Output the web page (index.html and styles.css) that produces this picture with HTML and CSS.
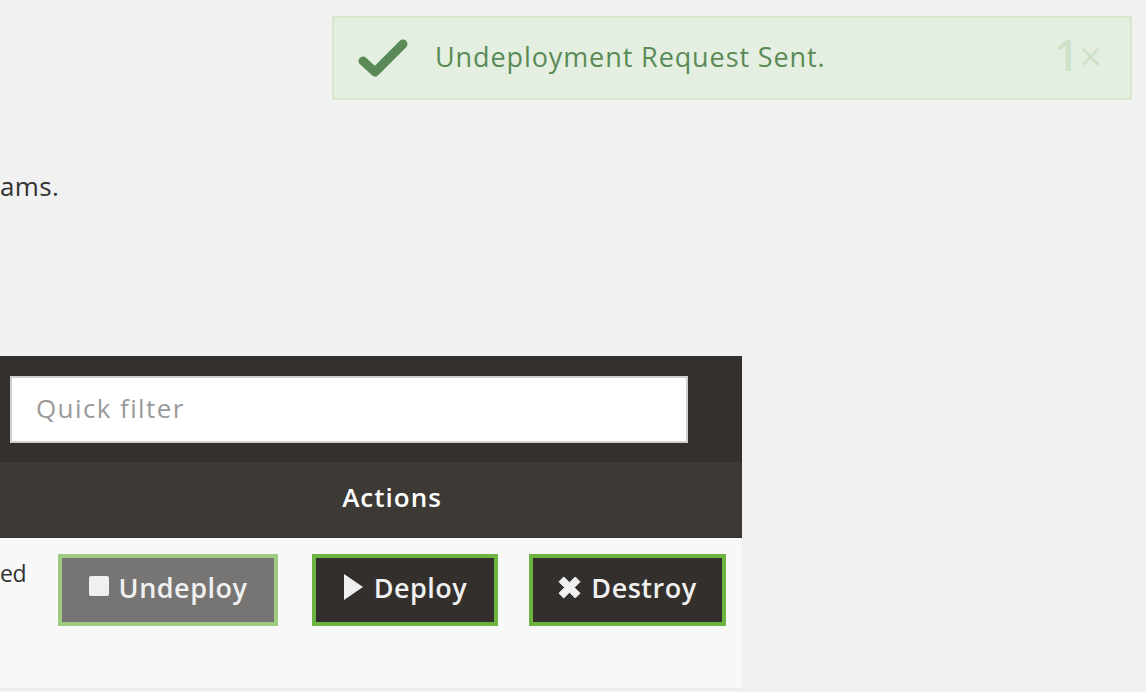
FILE: index.html
```html
<!DOCTYPE html>
<html>
<head>
<meta charset="utf-8">
<link rel="stylesheet" href="styles.css">
</head>
<body>
<div class="page">
  <p class="intro">ams.</p>
  <div class="table">
    <div class="filter-bar">
      <input class="filter" type="text" placeholder="Quick filter">
    </div>
    <div class="head-row">
      <div class="cell-first"></div>
      <div class="head-actions">Actions</div>
    </div>
    <div class="body-row">
      <div class="cell-first status">ed</div>
      <div class="actions">
        <button class="btn btn-undeploy"><span class="ico-stop"></span>Undeploy</button>
        <button class="btn btn-dark btn-deploy"><svg class="ico" width="21" height="28" viewBox="0 0 21 28"><polygon points="1,1 20,14 1,27" fill="#f0f0f0"/></svg>Deploy</button>
        <button class="btn btn-dark btn-destroy"><svg class="ico" width="23" height="23" viewBox="0 0 24 24"><path d="M6 1 L12 7 L18 1 L23 6 L17 12 L23 18 L18 23 L12 17 L6 23 L1 18 L7 12 L1 6 Z" fill="#f0f0f0" stroke="#f0f0f0" stroke-width="1" stroke-linejoin="round"/></svg>Destroy</button>
      </div>
    </div>
  </div>
</div>
<div class="toast">
  <svg class="check" width="50" height="40" viewBox="0 0 50 40"><path d="M5 23 L17 34 L45 6" stroke="#5a8b56" stroke-width="9" fill="none" stroke-linecap="round" stroke-linejoin="round"/></svg>
  <span class="toast-text">Undeployment Request Sent.</span>
  <span class="toast-count">1<span class="x">×</span></span>
</div>
</body>
</html>
```
FILE: styles.css
```css
html, body {
  margin: 0;
  padding: 0;
  background: #f1f1f1;
  font-family: "Open Sans", "Lato", sans-serif;
  overflow: hidden;
  width: 1146px;
  height: 692px;
}
.page {
  padding-top: 166px;
}
.intro {
  margin: 0;
  font-size: 26px;
  line-height: 40px;
  color: #333;
  height: 190px;
  letter-spacing: 0.4px;
}
.table {
  width: 742px;
}
.filter-bar {
  background: #34302d;
  height: 106px;
  padding: 20px 0 0 10px;
  box-sizing: border-box;
}
.filter {
  width: 678px;
  height: 67px;
  box-sizing: border-box;
  border: 2px solid #cfcfcf;
  background: #fff;
  font-family: inherit;
  font-size: 26px;
  letter-spacing: 1.4px;
  padding: 0 0 3px 24px;
  outline: none;
  color: #333;
}
.filter::placeholder {
  color: #9a9a9a;
}
.head-row {
  display: flex;
  background: #3d3a35;
  height: 76px;
  border-bottom: 1px solid #34302d;
  box-sizing: border-box;
}
.cell-first {
  width: 42px;
  flex: none;
}
.head-actions {
  flex: 1;
  text-align: center;
  color: #fff;
  font-weight: 600;
  font-size: 26px;
  letter-spacing: 1px;
  line-height: 70px;
}
.body-row {
  display: flex;
  background: #f8f8f8;
  height: 152px;
  border-bottom: 2px solid #ececec;
  box-sizing: border-box;
}
.status {
  font-size: 23px;
  color: #333;
  padding-top: 19px;
  overflow: hidden;
  white-space: nowrap;
  width: 42px;
  letter-spacing: -0.5px;
}
.actions {
  display: flex;
  align-items: flex-start;
  padding: 16px 0 0 16px;
}
.btn {
  display: flex;
  align-items: center;
  justify-content: center;
  height: 72px;
  box-sizing: border-box;
  border: 4px solid #6db33f;
  color: #f0f0f0;
  font-family: inherit;
  font-size: 27px;
  letter-spacing: 0.5px;
  font-weight: 600;
  padding: 0 0 6px 0;
  margin: 0;
  gap: 10px;
}
.btn-undeploy {
  width: 220px;
  background: #777573;
  border-color: #9dcc80;
}
.btn-dark {
  background: #332f2c;
}
.btn-deploy {
  width: 186px;
  margin-left: 34px;
}
.btn-destroy {
  width: 197px;
  margin-left: 31px;
}
.ico-stop {
  display: inline-block;
  width: 20px;
  height: 20px;
  background: #f0f0f0;
  border-radius: 2px;
  margin-bottom: 2px;
}
.ico {
  display: block;
}
.toast {
  position: absolute;
  left: 332px;
  top: 16px;
  width: 800px;
  height: 84px;
  box-sizing: border-box;
  border: 2px solid #d7e8cd;
  background: #e4efe1;
  display: flex;
  align-items: center;
  padding-left: 24px;
}
.check {
  flex: none;
}
.toast-text {
  margin-left: 27px;
  margin-bottom: 4px;
  font-size: 27px;
  letter-spacing: 0.9px;
  color: #5a8b56;
  flex: 1;
}
.toast-count {
  font-size: 44px;
  color: #cfe2c8;
  font-weight: 600;
  margin-right: 28px;
  margin-bottom: 8px;
  line-height: 1;
}
.toast-count .x {
  font-size: 40px;
  font-weight: 400;
}
```
